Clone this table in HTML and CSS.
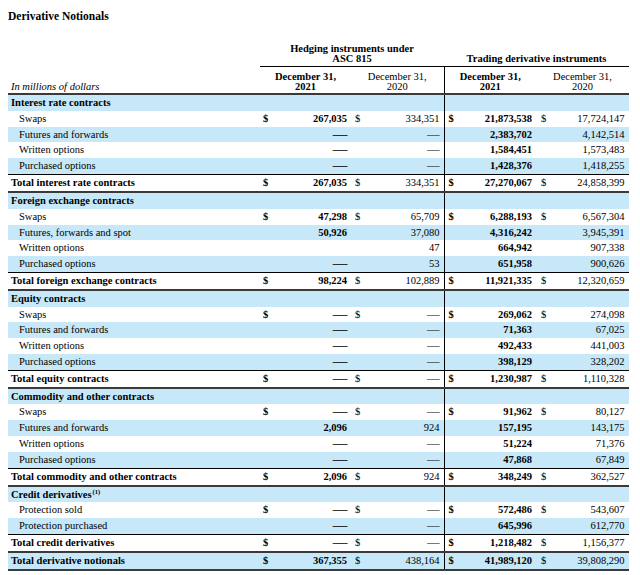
FILE: index.html
```html
<!DOCTYPE html>
<html lang="en">
<head>
<meta charset="utf-8">
<title>Derivative Notionals</title>
<link rel="stylesheet" href="styles.css">
</head>
<body>
<div class="page">
  <h1 class="title">Derivative Notionals</h1>
  <table class="notionals">
    <colgroup>
      <col class="c-lbl"><col class="c-1"><col class="c-2"><col class="c-3"><col class="c-4">
    </colgroup>
    <thead>
      <tr class="groups">
        <td></td>
        <td class="grp" colspan="2">Hedging instruments under<br>ASC 815</td>
        <td class="grp" colspan="2">Trading derivative instruments</td>
      </tr>
      <tr class="dates">
        <td class="units">In millions of dollars</td>
        <td class="date cur">December 31,<br>2021</td>
        <td class="date">December 31,<br>2020</td>
        <td class="date cur sep">December 31,<br>2021</td>
        <td class="date">December 31,<br>2020</td>
      </tr>
    </thead>
    <tbody>
      <tr class="sec"><td class="lbl">Interest rate contracts</td><td></td><td></td><td class="sep"></td><td></td></tr>
      <tr class="item"><td class="lbl">Swaps</td><td class="v v1"><span class="d">$</span>267,035</td><td class="v v2"><span class="d">$</span>334,351</td><td class="v v3 sep"><span class="d">$</span>21,873,538</td><td class="v v4"><span class="d">$</span>17,724,147</td></tr>
      <tr class="item alt"><td class="lbl">Futures and forwards</td><td class="v v1"><span class="dash">—</span></td><td class="v v2"><span class="dash">—</span></td><td class="v v3 sep">2,383,702</td><td class="v v4">4,142,514</td></tr>
      <tr class="item"><td class="lbl">Written options</td><td class="v v1"><span class="dash">—</span></td><td class="v v2"><span class="dash">—</span></td><td class="v v3 sep">1,584,451</td><td class="v v4">1,573,483</td></tr>
      <tr class="item alt"><td class="lbl">Purchased options</td><td class="v v1"><span class="dash">—</span></td><td class="v v2"><span class="dash">—</span></td><td class="v v3 sep">1,428,376</td><td class="v v4">1,418,255</td></tr>
      <tr class="tot"><td class="lbl">Total interest rate contracts</td><td class="v v1"><span class="d">$</span>267,035</td><td class="v v2"><span class="d">$</span>334,351</td><td class="v v3 sep"><span class="d">$</span>27,270,067</td><td class="v v4"><span class="d">$</span>24,858,399</td></tr>

      <tr class="sec"><td class="lbl">Foreign exchange contracts</td><td></td><td></td><td class="sep"></td><td></td></tr>
      <tr class="item"><td class="lbl">Swaps</td><td class="v v1"><span class="d">$</span>47,298</td><td class="v v2"><span class="d">$</span>65,709</td><td class="v v3 sep"><span class="d">$</span>6,288,193</td><td class="v v4"><span class="d">$</span>6,567,304</td></tr>
      <tr class="item alt"><td class="lbl">Futures, forwards and spot</td><td class="v v1">50,926</td><td class="v v2">37,080</td><td class="v v3 sep">4,316,242</td><td class="v v4">3,945,391</td></tr>
      <tr class="item"><td class="lbl">Written options</td><td class="v v1"></td><td class="v v2">47</td><td class="v v3 sep">664,942</td><td class="v v4">907,338</td></tr>
      <tr class="item alt"><td class="lbl">Purchased options</td><td class="v v1"><span class="dash">—</span></td><td class="v v2">53</td><td class="v v3 sep">651,958</td><td class="v v4">900,626</td></tr>
      <tr class="tot"><td class="lbl">Total foreign exchange contracts</td><td class="v v1"><span class="d">$</span>98,224</td><td class="v v2"><span class="d">$</span>102,889</td><td class="v v3 sep"><span class="d">$</span>11,921,335</td><td class="v v4"><span class="d">$</span>12,320,659</td></tr>

      <tr class="sec"><td class="lbl">Equity contracts</td><td></td><td></td><td class="sep"></td><td></td></tr>
      <tr class="item"><td class="lbl">Swaps</td><td class="v v1"><span class="d">$</span><span class="dash">—</span></td><td class="v v2"><span class="d">$</span><span class="dash">—</span></td><td class="v v3 sep"><span class="d">$</span>269,062</td><td class="v v4"><span class="d">$</span>274,098</td></tr>
      <tr class="item alt"><td class="lbl">Futures and forwards</td><td class="v v1"><span class="dash">—</span></td><td class="v v2"><span class="dash">—</span></td><td class="v v3 sep">71,363</td><td class="v v4">67,025</td></tr>
      <tr class="item"><td class="lbl">Written options</td><td class="v v1"><span class="dash">—</span></td><td class="v v2"><span class="dash">—</span></td><td class="v v3 sep">492,433</td><td class="v v4">441,003</td></tr>
      <tr class="item alt"><td class="lbl">Purchased options</td><td class="v v1"><span class="dash">—</span></td><td class="v v2"><span class="dash">—</span></td><td class="v v3 sep">398,129</td><td class="v v4">328,202</td></tr>
      <tr class="tot"><td class="lbl">Total equity contracts</td><td class="v v1"><span class="d">$</span><span class="dash">—</span></td><td class="v v2"><span class="d">$</span><span class="dash">—</span></td><td class="v v3 sep"><span class="d">$</span>1,230,987</td><td class="v v4"><span class="d">$</span>1,110,328</td></tr>

      <tr class="sec"><td class="lbl">Commodity and other contracts</td><td></td><td></td><td class="sep"></td><td></td></tr>
      <tr class="item"><td class="lbl">Swaps</td><td class="v v1"><span class="d">$</span><span class="dash">—</span></td><td class="v v2"><span class="d">$</span><span class="dash">—</span></td><td class="v v3 sep"><span class="d">$</span>91,962</td><td class="v v4"><span class="d">$</span>80,127</td></tr>
      <tr class="item alt"><td class="lbl">Futures and forwards</td><td class="v v1">2,096</td><td class="v v2">924</td><td class="v v3 sep">157,195</td><td class="v v4">143,175</td></tr>
      <tr class="item"><td class="lbl">Written options</td><td class="v v1"><span class="dash">—</span></td><td class="v v2"><span class="dash">—</span></td><td class="v v3 sep">51,224</td><td class="v v4">71,376</td></tr>
      <tr class="item alt"><td class="lbl">Purchased options</td><td class="v v1"><span class="dash">—</span></td><td class="v v2"><span class="dash">—</span></td><td class="v v3 sep">47,868</td><td class="v v4">67,849</td></tr>
      <tr class="tot"><td class="lbl">Total commodity and other contracts</td><td class="v v1"><span class="d">$</span>2,096</td><td class="v v2"><span class="d">$</span>924</td><td class="v v3 sep"><span class="d">$</span>348,249</td><td class="v v4"><span class="d">$</span>362,527</td></tr>

      <tr class="sec"><td class="lbl">Credit derivatives<sup class="fn">(1)</sup></td><td></td><td></td><td class="sep"></td><td></td></tr>
      <tr class="item"><td class="lbl">Protection sold</td><td class="v v1"><span class="d">$</span><span class="dash">—</span></td><td class="v v2"><span class="d">$</span><span class="dash">—</span></td><td class="v v3 sep"><span class="d">$</span>572,486</td><td class="v v4"><span class="d">$</span>543,607</td></tr>
      <tr class="item alt"><td class="lbl">Protection purchased</td><td class="v v1"><span class="dash">—</span></td><td class="v v2"><span class="dash">—</span></td><td class="v v3 sep">645,996</td><td class="v v4">612,770</td></tr>
      <tr class="tot"><td class="lbl">Total credit derivatives</td><td class="v v1"><span class="d">$</span><span class="dash">—</span></td><td class="v v2"><span class="d">$</span><span class="dash">—</span></td><td class="v v3 sep"><span class="d">$</span>1,218,482</td><td class="v v4"><span class="d">$</span>1,156,377</td></tr>
      <tr class="tot alt grand"><td class="lbl">Total derivative notionals</td><td class="v v1"><span class="d">$</span>367,355</td><td class="v v2"><span class="d">$</span>438,164</td><td class="v v3 sep"><span class="d">$</span>41,989,120</td><td class="v v4"><span class="d">$</span>39,808,290</td></tr>
    </tbody>
  </table>
</div>
</body>
</html>
```

FILE: styles.css
```css
html, body {
  margin: 0;
  background: #ffffff;
}

body {
  font-family: "Liberation Serif", "Times New Roman", serif;
  color: #000000;
}

.page {
  padding: 9px 8px 0 8px;
}

.title {
  margin: 0;
  font-size: 11.5px;
  line-height: 14px;
  font-weight: bold;
}

.notionals {
  margin-top: 21px;
  width: 621px;
  border-collapse: collapse;
  table-layout: fixed;
  font-size: 10.5px;
}

.c-lbl { width: 252px; }
.c-1 { width: 91px; }
.c-2 { width: 93px; }
.c-3 { width: 92px; }
.c-4 { width: 93px; }

.notionals td {
  padding: 0;
  line-height: 15.82px;
  white-space: nowrap;
}

/* header */
.notionals .grp {
  text-align: center;
  font-weight: bold;
  line-height: 10px;
  padding-bottom: 2px;
  vertical-align: bottom;
  border-bottom: 1px solid #000000;
}

.notionals .dates td {
  border-bottom: 2px solid #3a3a3a;
  vertical-align: bottom;
  line-height: 10px;
}

.notionals .date {
  text-align: center;
  padding: 5px 0 1px 0;
}

.notionals .date.cur {
  font-weight: bold;
}

.notionals .units {
  font-style: italic;
  padding: 0 0 1px 3px;
}

.notionals .sep {
  border-left: 1px solid #000000;
}

/* body */
.notionals .sec td,
.notionals .alt td {
  background: #c6e8f8;
}

.notionals .sec .lbl,
.notionals .tot .lbl {
  font-weight: bold;
  padding-left: 3px;
}

.notionals .item .lbl {
  padding-left: 11px;
}

.notionals .tot td {
  border-top: 1px solid #000000;
  border-bottom: 2px solid #3a3a3a;
}

.notionals .v {
  text-align: right;
  padding: 0 4px 0 4px;
}

.notionals .v1 {
  padding-left: 3px;
  font-weight: bold;
}

.notionals .v3 {
  font-weight: bold;
}

.notionals .v4 {
  padding-left: 5px;
  padding-right: 4.5px;
}

.d {
  float: left;
}

.dash {
  display: inline-block;
  transform: scaleX(1.2);
  transform-origin: right center;
}

.v1 .dash {
  transform: scaleX(1.4);
}

.fn {
  font-size: 6.5px;
  line-height: 0;
  vertical-align: 4px;
  margin-left: 1px;
}
```
